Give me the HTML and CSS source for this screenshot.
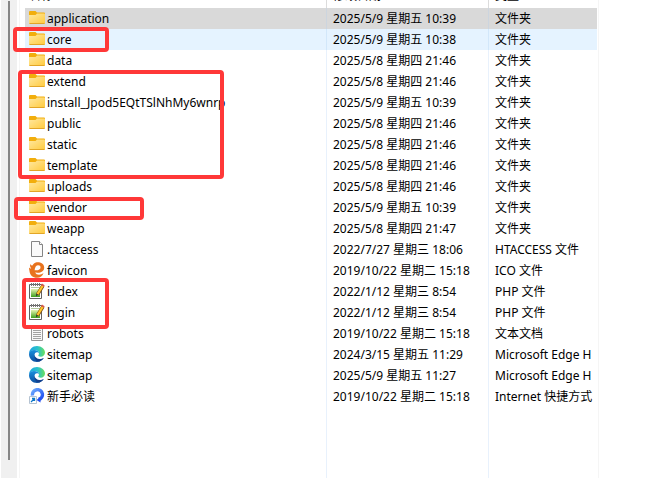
FILE: index.html
```html
<!DOCTYPE html>
<html lang="zh-CN">
<head>
<meta charset="utf-8">
<title>文件列表</title>
<link rel="stylesheet" href="styles.css">
</head>
<body>
<svg class="defs" aria-hidden="true">
  <defs>
    <linearGradient id="gFolder" x1="0" y1="0" x2="1" y2="1"><stop offset="0" stop-color="#ffe8a0"/><stop offset="1" stop-color="#ffca3c"/></linearGradient>
    <linearGradient id="gPad" x1="0" y1="0" x2="0" y2="1"><stop offset="0" stop-color="#e4f5b0"/><stop offset="1" stop-color="#3fa01c"/></linearGradient>
    <linearGradient id="gEdge" x1="0" y1="0" x2="1" y2="0"><stop offset="0" stop-color="#1ba2e4"/><stop offset=".55" stop-color="#2bc3c9"/><stop offset="1" stop-color="#6be05a"/></linearGradient>
    <linearGradient id="gEdgeLow" x1="0" y1="0" x2="0" y2="1"><stop offset="0" stop-color="#1a8fdc"/><stop offset="1" stop-color="#0c4fa0"/></linearGradient>
    <linearGradient id="gLink" x1="0" y1="0" x2="1" y2="1"><stop offset="0" stop-color="#6aa8ff"/><stop offset="1" stop-color="#1f4df0"/></linearGradient>
  </defs>
  <symbol id="folder" viewBox="0 0 16 16">
    <path d="M0 2Q0 1 1 1h5.500L8 2.500h7q1 0 1 1V8H0z" fill="#f2ae0c"/>
    <path d="M0 5h6.500L8 3.500h7q1 0 1 1V13q0 1-1 1H1q-1 0-1-1z" fill="url(#gFolder)"/>
    <path d="M.5 13.500h15" stroke="#e2a526"/>
  </symbol>
  <symbol id="blank" viewBox="0 0 16 16">
    <path d="M2.500.5h8l3 3v12h-11z" fill="#fafafa" stroke="#858585"/>
    <path d="M10.500.5v3h3" fill="#fff" stroke="#858585"/>
  </symbol>
  <symbol id="text" viewBox="0 0 16 16">
    <path d="M2.500.5h11v15h-11z" fill="#f8f8f8" stroke="#969696"/>
    <path d="M4 3.500h8M4 5.500h8M4 7.500h8M4 9.500h8M4 11.500h8M4 13.500h8" stroke="#a2a2a2"/>
  </symbol>
  <symbol id="favicon" viewBox="0 0 16 16">
    <path d="M5 1.500C8-.8 15 .3 15.200 5.500c.1 3.500-3.200 5.200-6.200 5.200-1.500 0-2.400-.2-3-.5.700 1.700 2.300 2.500 4 2.500 1.800 0 3.200-.6 4.500-1.700-.8 2.700-3.300 4.800-6.500 4.800-4.200 0-7.200-2.700-7.500-6.500C.4 7.800 0 7 0 5.500c1 1 1.500 1.200 2.200 1C.8 5 .8 3.300 1.600 2c.5 1.200 1 1.600 1.800 1.500C3.800 2.700 4.300 2 5 1.500z" fill="#e8731e"/>
    <path d="M5.600 8.200C5.800 5.300 7.200 3.300 9.200 3.300c1.500 0 2.300.8 2.300 2.100 0 2-2.300 3.200-5.900 2.800z" fill="#fff"/>
  </symbol>
  <symbol id="php" viewBox="0 0 16 16">
    <path d="M.500 1.500h12v14H.500z" fill="#fff" stroke="#626262"/>
    <path d="M2 6h9v8H2z" fill="url(#gPad)"/>
    <path d="M2.500 0v3M4.500 0v3M6.500 0v3M8.500 0v3M10.500 0v3" stroke="#777"/>
    <path d="M2 4.500h9" stroke="#b4c9a0"/>
    <path d="M8.500 11.500 14 2.500" stroke="#7c4b10" stroke-width="3.400"/>
    <path d="M8.500 11.200 13.800 2.700" stroke="#ffc629" stroke-width="2.200"/>
    <path d="m13 .5 2.700 1.700-1 1.500-2.700-1.700z" fill="#d95850"/>
    <path d="m7 13.500.2-3 2 1.300z" fill="#333"/>
  </symbol>
  <symbol id="edge" viewBox="0 0 16 16">
    <path d="M0 8C0 3.500 3.500 0 8 0s8 3 8 6.500c0 2.700-2 4.200-4.200 4.200-1.600 0-2.500-.6-2.500-1.200 0-.5.700-.8.700-2C10 5.500 8 4 5.500 4 2.500 4 .5 6 0 8z" fill="url(#gEdge)"/>
    <path d="M0 8c.2-2.400 2.300-4 5-4C8 4 10 5.700 10 7.500c-.4-.8-1.200-1.200-2-1.200C6.500 6.300 5.500 7.500 5.500 9c0 2.800 2.500 4.500 5 4.500 1.800 0 3-.6 4.200-1.400C13.200 14.500 10.800 16 8 16c-4.500 0-8-3.500-8-8z" fill="url(#gEdgeLow)"/>
    <path d="M5.500 8.500c-.8 3.500 1.500 7 5 7 2-.8 3.500-2 4.400-3.400-4 2.200-9 .5-9.400-3.600z" fill="#123f8c"/>
  </symbol>
  <symbol id="shortcut" viewBox="0 0 16 16">
    <path d="M3.500 7.500a5 5 0 1 1 6 4" fill="none" stroke="url(#gLink)" stroke-width="3.400"/>
    <path d="M11.500 9v5.500L7.500 12z" fill="#1f4df0"/>
    <path d="M.500 8.500h7v7h-7z" fill="#fff" stroke="#b5c3d2"/>
    <path d="M2 14 5.500 10.500M3 10.500h2.500V13" fill="none" stroke="#0c78c8" stroke-width="1.300"/>
  </symbol>
</svg>
<div class="window">
  <div class="scrollbar"><div class="thumb"></div></div>
  <main class="list">
    <table class="files">
      <colgroup><col><col class="col-date"><col class="col-type"></colgroup>
      <thead>
        <tr><th scope="col"><span class="head">名称</span></th><th scope="col"><span class="head">修改日期</span></th><th scope="col"><span class="head">类型</span></th></tr>
      </thead>
      <tbody>
        <tr class="selected"><td><span class="name"><svg class="icon"><use href="#folder"/></svg>application</span></td><td>2025/5/9 星期五 10:39</td><td>文件夹</td></tr>
        <tr class="hovered"><td><span class="name"><svg class="icon"><use href="#folder"/></svg>core</span></td><td>2025/5/9 星期五 10:38</td><td>文件夹</td></tr>
        <tr><td><span class="name"><svg class="icon"><use href="#folder"/></svg>data</span></td><td>2025/5/8 星期四 21:46</td><td>文件夹</td></tr>
        <tr><td><span class="name"><svg class="icon"><use href="#folder"/></svg>extend</span></td><td>2025/5/8 星期四 21:46</td><td>文件夹</td></tr>
        <tr><td><span class="name"><svg class="icon"><use href="#folder"/></svg>install_Jpod5EQtTSlNhMy6wnrp</span></td><td>2025/5/9 星期五 10:39</td><td>文件夹</td></tr>
        <tr><td><span class="name"><svg class="icon"><use href="#folder"/></svg>public</span></td><td>2025/5/8 星期四 21:46</td><td>文件夹</td></tr>
        <tr><td><span class="name"><svg class="icon"><use href="#folder"/></svg>static</span></td><td>2025/5/8 星期四 21:46</td><td>文件夹</td></tr>
        <tr><td><span class="name"><svg class="icon"><use href="#folder"/></svg>template</span></td><td>2025/5/8 星期四 21:46</td><td>文件夹</td></tr>
        <tr><td><span class="name"><svg class="icon"><use href="#folder"/></svg>uploads</span></td><td>2025/5/8 星期四 21:46</td><td>文件夹</td></tr>
        <tr><td><span class="name"><svg class="icon"><use href="#folder"/></svg>vendor</span></td><td>2025/5/9 星期五 10:39</td><td>文件夹</td></tr>
        <tr><td><span class="name"><svg class="icon"><use href="#folder"/></svg>weapp</span></td><td>2025/5/8 星期四 21:47</td><td>文件夹</td></tr>
        <tr><td><span class="name"><svg class="icon"><use href="#blank"/></svg>.htaccess</span></td><td>2022/7/27 星期三 18:06</td><td>HTACCESS 文件</td></tr>
        <tr><td><span class="name"><svg class="icon"><use href="#favicon"/></svg>favicon</span></td><td>2019/10/22 星期二 15:18</td><td>ICO 文件</td></tr>
        <tr><td><span class="name"><svg class="icon"><use href="#php"/></svg>index</span></td><td>2022/1/12 星期三 8:54</td><td>PHP 文件</td></tr>
        <tr><td><span class="name"><svg class="icon"><use href="#php"/></svg>login</span></td><td>2022/1/12 星期三 8:54</td><td>PHP 文件</td></tr>
        <tr><td><span class="name"><svg class="icon"><use href="#text"/></svg>robots</span></td><td>2019/10/22 星期二 15:18</td><td>文本文档</td></tr>
        <tr><td><span class="name"><svg class="icon"><use href="#edge"/></svg>sitemap</span></td><td>2024/3/15 星期五 11:29</td><td>Microsoft Edge H</td></tr>
        <tr><td><span class="name"><svg class="icon"><use href="#edge"/></svg>sitemap</span></td><td>2025/5/9 星期五 11:27</td><td>Microsoft Edge H</td></tr>
        <tr><td><span class="name"><svg class="icon"><use href="#shortcut"/></svg>新手必读</span></td><td>2019/10/22 星期二 15:18</td><td>Internet 快捷方式</td></tr>
      </tbody>
    </table>
    <div class="rest"><span></span><span></span><span></span></div>
  </main>
  <div class="mark mark-core"></div>
  <div class="mark mark-group"></div>
  <div class="mark mark-vendor"></div>
  <div class="mark mark-php"></div>
</div>
</body>
</html>
```
FILE: styles.css
```css
* { box-sizing: border-box; }

body {
  margin: 0;
  background: #fff;
  color: #000;
  font: 12px/21px "Noto Sans", "Noto Sans CJK SC", sans-serif;
}

.defs { position: absolute; width: 0; height: 0; }

.window {
  position: relative;
  display: flex;
  min-height: 100vh;
  padding: 0 71px 0 1px;
  overflow: hidden;
}

.scrollbar {
  display: flex;
  justify-content: center;
  width: 16px;
  padding: 1px 0 18px;
  background: #f0f0f0;
}

.thumb { width: 2px; background: #868686; }

.list {
  display: flex;
  flex: 1;
  flex-direction: column;
  min-width: 0;
  margin-left: 2px;
  padding: 0 1px 0 5px;
  border: solid #f5f5f5;
  border-width: 0 1px;
}

.files {
  width: 100%;
  table-layout: fixed;
  border-collapse: separate;
  border-spacing: 0;
}

.col-date { width: 162px; }
.col-type { width: 109px; }

th, td {
  height: 21px;
  padding: 0 0 0 6px;
  border-left: 1px solid #e8f1fc;
  overflow: hidden;
  white-space: nowrap;
  text-align: left;
  vertical-align: top;
  font-weight: 400;
}

th { height: 8px; border-left-color: #dcdcdc; }

th:first-child, td:first-child { padding-left: 4px; border-left: 0; }

.head {
  display: flex;
  align-items: flex-end;
  height: 8px;
  padding-bottom: 6px;
  line-height: 12px;
  overflow: hidden;
}

.name { display: flex; align-items: flex-start; gap: 2px; }

.icon { flex: none; width: 16px; height: 16px; margin-top: 2px; }

.selected td { background: #d9d9d9; border-left-color: #ccd5df; }
.hovered td { background: #e5f3ff; border-left-color: #d2e7fa; }

.rest {
  display: grid;
  flex: 1;
  grid-template-columns: 1fr 162px 109px;
}

.rest span + span { border-left: 1px solid #e8f1fc; }

.mark {
  position: absolute;
  border: 4px solid #ff3838;
  border-radius: 4px;
  pointer-events: none;
}

.mark-core { left: 13px; top: 27px; width: 96px; height: 25px; }
.mark-group { left: 18px; top: 70px; width: 206px; height: 109px; }
.mark-vendor { left: 14px; top: 197px; width: 130px; height: 23px; }
.mark-php { left: 22px; top: 278px; width: 87px; height: 51px; }
```
